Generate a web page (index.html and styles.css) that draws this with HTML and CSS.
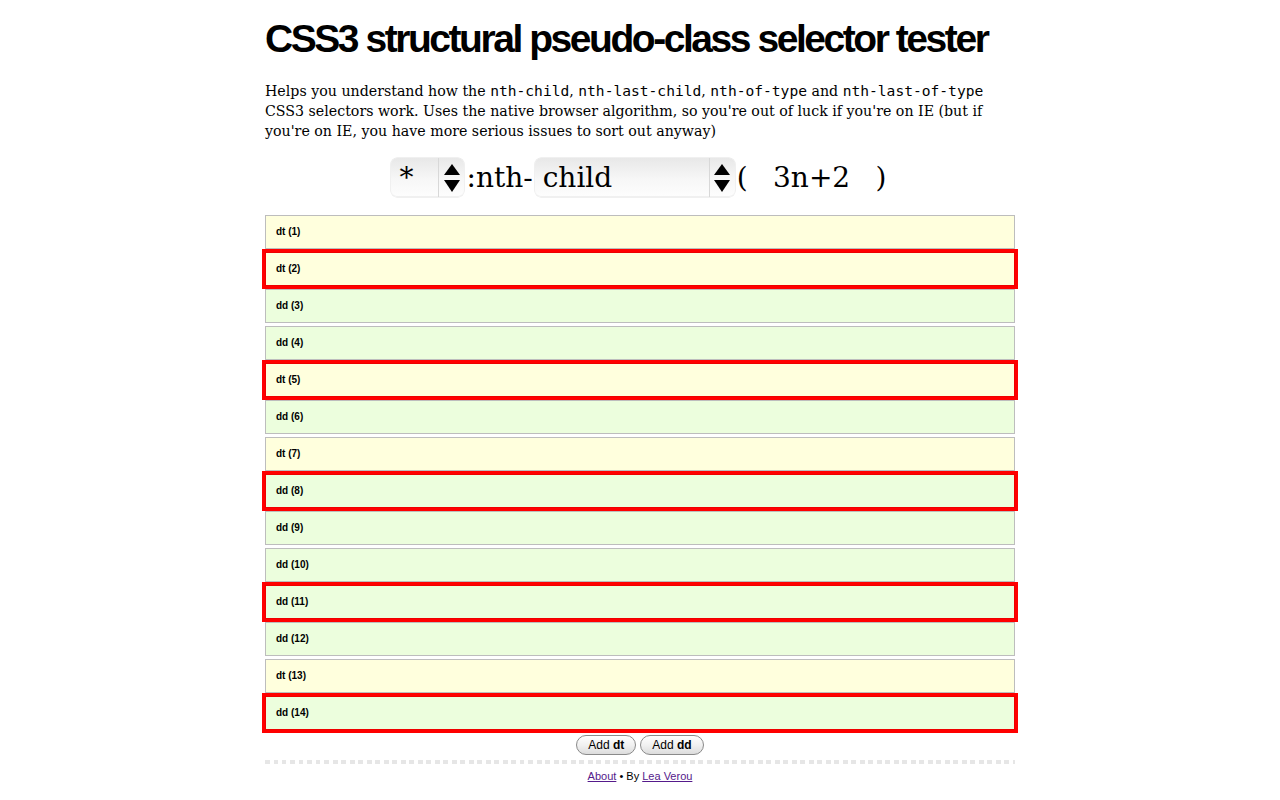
FILE: index.html
```html
<!DOCTYPE html>
<html>
<head>
<meta charset="utf-8">
<title>CSS3 structural pseudo-class selector tester</title>
<link rel="stylesheet" href="styles.css">
</head>
<body>
<div class="page">
  <h1 class="title">CSS3 structural pseudo-class selector tester</h1>
  <p class="intro">Helps you understand how the <code>nth-child</code>, <code>nth-last-child</code>, <code>nth-of-type</code> and <code>nth-last-of-type</code> CSS3 selectors work. Uses the native browser algorithm, so you're out of luck if you're on IE (but if you're on IE, you have more serious issues to sort out anyway)</p>

  <div class="selector">
    <div class="sel sel-tag">
      <span class="sel-value">*</span>
      <span class="sel-arrow"><svg width="16" height="30" viewBox="0 0 16 30"><polygon points="0,12 8,1 16,12" fill="#000"/><polygon points="0,17 16,17 8,29" fill="#000"/></svg></span>
    </div>
    <span class="sel-text">:nth-</span>
    <div class="sel sel-kind">
      <span class="sel-value">child</span>
      <span class="sel-arrow"><svg width="16" height="30" viewBox="0 0 16 30"><polygon points="0,12 8,1 16,12" fill="#000"/><polygon points="0,17 16,17 8,29" fill="#000"/></svg></span>
    </div>
    <span class="sel-text">(</span>
    <span class="formula">3n+2</span>
    <span class="sel-text">)</span>
  </div>

  <dl class="list">
    <dt class="item dt">dt (1)</dt>
    <dt class="item dt hit">dt (2)</dt>
    <dd class="item dd">dd (3)</dd>
    <dd class="item dd">dd (4)</dd>
    <dt class="item dt hit">dt (5)</dt>
    <dd class="item dd">dd (6)</dd>
    <dt class="item dt">dt (7)</dt>
    <dd class="item dd hit">dd (8)</dd>
    <dd class="item dd">dd (9)</dd>
    <dd class="item dd">dd (10)</dd>
    <dd class="item dd hit">dd (11)</dd>
    <dd class="item dd">dd (12)</dd>
    <dt class="item dt">dt (13)</dt>
    <dd class="item dd hit">dd (14)</dd>
  </dl>

  <div class="buttons">
    <button class="btn">Add <strong>dt</strong></button>
    <button class="btn">Add <strong>dd</strong></button>
  </div>

  <div class="rule"></div>

  <footer class="footer"><a href="#about">About</a> • By <a href="#lea">Lea Verou</a></footer>
</div>
</body>
</html>
```
FILE: styles.css
```css
html, body {
  margin: 0;
  padding: 0;
  background: #fff;
}

body {
  font-family: "DejaVu Serif", Georgia, serif;
  color: #000;
}

.page {
  width: 750px;
  margin: 0 auto;
}

.title {
  margin: 15px 0 0;
  font-family: "Liberation Sans", Arial, sans-serif;
  font-weight: bold;
  font-size: 39px;
  line-height: 48px;
  letter-spacing: -2.45px;
  white-space: nowrap;
}

.intro {
  margin: 18px 0 0;
  font-size: 14.2px;
  line-height: 20px;
  padding-right: 24px;
}

.intro code {
  font-family: "DejaVu Sans Mono", "Liberation Mono", monospace;
  font-size: 14.6px;
}

.selector {
  margin-top: 16px;
  height: 41px;
  display: flex;
  justify-content: center;
  align-items: center;
  font-size: 28px;
}

.sel {
  display: flex;
  align-items: stretch;
  height: 39px;
  border-radius: 6px;
  background: linear-gradient(#e8e8e8, #f7f7f7 55%, #fdfdfd);
  box-shadow: inset 0 -1px 0 #f0f0f0, 0 0 0 0.5px #e2e2e2;
}

.sel-tag { width: 73px; }
.sel-kind { width: 200px; }

.sel-value {
  flex: 1;
  padding-left: 8px;
  line-height: 39px;
}

.sel-arrow {
  width: 25px;
  border-left: 1px solid #d8d8d8;
  display: flex;
  align-items: center;
  justify-content: center;
}

.sel-text {
  padding: 0 2px;
  line-height: 39px;
}

.formula {
  width: 124px;
  text-align: center;
  line-height: 39px;
}

.list {
  margin: 17px 0 0;
  padding: 0;
}

.item {
  margin: 0 0 3px;
  height: 32px;
  padding: 0 10px;
  border: 1px solid #bdbdbd;
  font-family: "Liberation Sans", Arial, sans-serif;
  font-weight: bold;
  font-size: 10px;
  line-height: 32px;
  box-sizing: content-box;
}

.dt { background: #ffffdd; }
.dd { background: #ecfedd; }

.hit {
  border-color: #e00;
  outline: 3px solid #f00;
}

.buttons {
  display: flex;
  justify-content: center;
  gap: 4px;
  margin-top: 5px;
}

.btn {
  height: 20px;
  padding: 0 11px;
  border: 1px solid #8a8a8a;
  border-radius: 10px;
  background: linear-gradient(#ffffff, #f1f1f1 50%, #dcdcdc);
  font-family: "Liberation Sans", Arial, sans-serif;
  font-size: 12px;
  color: #000;
  line-height: 18px;
}

.btn strong { font-weight: bold; }

.rule {
  margin-top: 5px;
  height: 4px;
  background: repeating-linear-gradient(90deg, #e6e6e6 0 4.5px, transparent 4.5px 8.5px);
}

.footer {
  margin-top: 5px;
  text-align: center;
  font-family: "Liberation Sans", Arial, sans-serif;
  font-size: 11px;
  line-height: 14px;
}

.footer a { color: #551a8b; }
```
